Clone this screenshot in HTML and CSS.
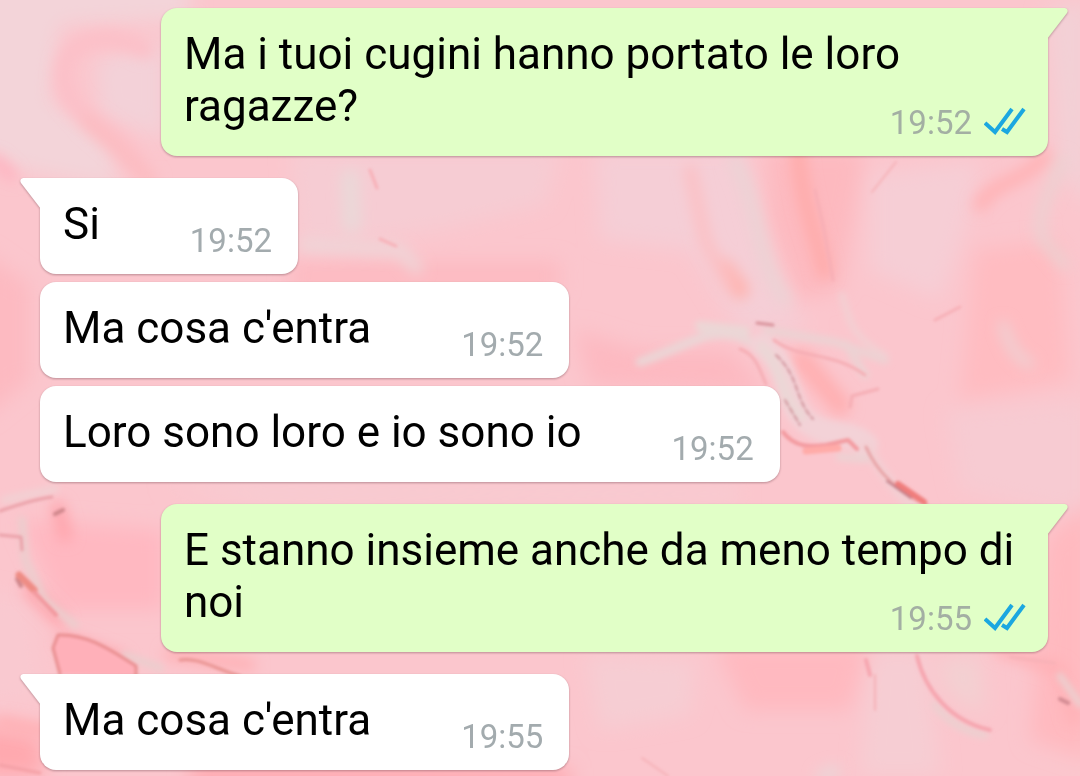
FILE: index.html
```
<!DOCTYPE html>
<html lang="it">
 <head>
 <meta charset="UTF-8">
 <meta name="viewport" content="width=device-width, initial-scale=1">
 <title>Chat</title>
 <link rel="stylesheet" href="styles.css">
 </head>

 <body>

  <!-- marble wallpaper -->
  <svg class="wallpaper" viewBox="0 0 1080 776" preserveAspectRatio="xMidYMid slice" aria-hidden="true">
   <defs>
    <filter id="wide" x="-50%" y="-50%" width="200%" height="200%"><feGaussianBlur stdDeviation="10"/></filter>
    <filter id="mid" x="-50%" y="-50%" width="200%" height="200%"><feGaussianBlur stdDeviation="7"/></filter>
    <filter id="soft" x="-20%" y="-20%" width="140%" height="140%"><feGaussianBlur stdDeviation="3"/></filter>
    <filter id="fine" x="-20%" y="-20%" width="140%" height="140%"><feGaussianBlur stdDeviation="1.5"/></filter>
   </defs>
   <rect width="1080" height="776" fill="#fbc6cd"/>

   <g filter="url(#wide)">
    <path fill="#f3d4d9" d="M-40 -40H190V20L60 25L50 100L110 140L120 190L20 170L-40 140Z"/>
    <path fill="#f3d1d8" d="M95 60L165 40V140L100 115Z"/>
    <path fill="#f6ccd3" d="M290 150H560L545 205L440 230L300 250Z"/>
    <path fill="#f5ced6" d="M595 150L740 150L770 270L810 330L740 330L690 250L600 240Z"/>
    <path fill="#f6ced5" d="M870 175L980 160L965 230L940 300L870 270Z"/>
    <path fill="#f3d0d6" d="M1045 10L1090 0V210L1060 170Z"/>
    <path fill="#fdb9bf" d="M765 150H865L840 290L800 300L770 220Z"/>
    <path fill="#fdb9c1" d="M575 330L640 350L730 350L770 395L590 385Z"/>
    <path fill="#ffbcc1" d="M975 250L1060 240L1070 380L960 400Z"/>
    <path fill="#fdbac1" d="M-20 250L30 285V380L-20 420Z"/>
    <path fill="#f7cbd2" d="M945 410L1090 400V520L960 490Z"/>
    <path fill="#f6cdd3" d="M160 485L740 488V500L260 502Z"/>
    <path fill="#f6cdd3" d="M585 655L695 660L690 715L600 730Z"/>
    <path fill="#ffb9c0" d="M715 645L870 645L850 710L745 710Z"/>
    <path fill="#f6cdd3" d="M870 650L925 650L940 776L860 776Z"/>
    <path fill="#f3d0d2" d="M935 660L980 655L985 715L950 695Z"/>
    <path fill="#ffb9bf" d="M1045 540L1090 500V760L1030 740Z"/>
    <path fill="#ffb8c1" d="M20 520L165 530V610L60 610Z"/>
    <path fill="#f9c9d0" d="M-20 590L30 600L45 700L-20 705Z"/>
    <path fill="#ffa9af" d="M-20 725L40 735L45 776H-20Z"/>
    <path fill="#fdbac1" d="M290 262H560V290H290Z"/>
    <path fill="#ffa9b0" d="M190 764L570 768V790H190Z"/>
   </g>

   <g filter="url(#mid)" fill="none" stroke-linecap="round">
    <path stroke="#fcc0c8" stroke-width="18" d="M145 50C100 25 55 45 65 85C75 125 120 125 140 170"/>
    <path stroke="#fcbcc1" stroke-width="16" d="M88 122L120 150L150 180"/>
    <path stroke="#ffb2c0" stroke-width="12" d="M-5 160L12 176"/>
    <path stroke="#ffaaa9" stroke-width="14" d="M798 150C802 205 815 230 825 272"/>
    <path stroke="#ffb2ae" stroke-width="18" d="M724 268L740 290"/>
    <path stroke="#fcbfc3" stroke-width="12" d="M690 170L705 240L728 285"/>
    <path stroke="#ead8d8" stroke-width="18" d="M350 178L352 224"/>
    <path stroke="#eed6d8" stroke-width="12" d="M305 245L400 250L417 268"/>
    <path stroke="#ead4d6" stroke-width="12" d="M735 160C760 210 755 255 785 300"/>
    <path stroke="#ead2d2" stroke-width="10" d="M1062 160C1055 185 1030 220 1045 242L1065 265"/>
    <path stroke="#ffb2b5" stroke-width="14" d="M1045 156C1020 185 995 180 980 205"/>
    <path stroke="#ffb0b2" stroke-width="22" d="M802 360L840 405"/>
    <path stroke="#ead5d7" stroke-width="8" d="M1003 325C1010 350 1020 360 1030 364"/>
    <path stroke="#ffb0b5" stroke-width="12" d="M1000 650L1060 670L1075 720"/>
    <path stroke="#ffa4ac" stroke-width="14" d="M65 640L120 660M58 508L65 535M30 590L60 620"/>
    <path stroke="#ffafb3" stroke-width="12" d="M0 722L50 732M170 654L250 665"/>
    <path stroke="#ead6d8" stroke-width="12" d="M822 776L835 771"/>
   </g>

   <!-- light ribbons -->
   <g filter="url(#soft)" fill="none" stroke-linecap="round" stroke-linejoin="round">
    <path stroke="#ebd5d6" stroke-width="9" d="M640 362C665 353 682 345 705 336C730 331 744 337 758 347"/>
    <path stroke="#f3d2d7" stroke-width="24" d="M762 345C792 365 785 410 810 424C830 438 850 430 866 445"/>
    <path stroke="#f3cfd3" stroke-width="10" d="M866 445C880 470 895 492 915 508"/>
    <path stroke="#ebd7d6" stroke-width="10" d="M762 347C785 371 781 400 801 416M700 326L745 331"/>
    <path stroke="#ecd2d3" stroke-width="8" d="M767 330L835 342L885 360M846 344L865 375M840 457L866 459"/>
    <path stroke="#f2d0d3" stroke-width="6" d="M842 295C850 322 850 335 885 355"/>
    <path stroke="#ebd0d0" stroke-width="7" d="M935 705C948 722 965 732 985 735M1060 676L1080 704"/>
    <path stroke="#eccdce" stroke-width="8" d="M22 520L25 560L45 600L75 625M125 655L160 668"/>
    <path stroke="#f2d0d3" stroke-width="8" d="M5 500L55 489"/>
   </g>

   <!-- dark veins -->
   <g filter="url(#fine)" fill="none" stroke-linecap="round" stroke-linejoin="round">
    <path stroke="#d8919a" stroke-width="3" d="M757 323L773 325"/>
    <path stroke="#f5adb4" stroke-width="3" d="M774 340C800 360 830 350 865 375M850 407L852 396L878 389M740 349C757 355 760 372 766 384"/>
    <path stroke="#cf9199" stroke-width="2" stroke-dasharray="6 3" d="M776 355C800 377 794 399 813 419M785 400L800 425"/>
    <path stroke="#f3999e" stroke-width="4" d="M783 432C795 448 811 447 826 445L848 440L857 449"/>
    <path stroke="#ffaba8" stroke-width="7" d="M806 451L838 448"/>
    <path stroke="#e7a0a3" stroke-width="3" d="M866 447C878 474 898 492 927 505"/>
    <path stroke="#f07d7b" stroke-width="6" d="M898 484L924 502"/>
    <path stroke="#b87480" stroke-width="2" d="M887 481L911 498"/>
    <path stroke="#f7afb6" stroke-width="3" d="M815 190L824 230L833 280M370 170L377 188M380 239L396 246M935 320L960 307"/>
    <path stroke="#f6a5af" stroke-width="4" d="M917 656C925 690 950 721 990 730M866 660L870 675"/>
    <path stroke="#d18a92" stroke-width="4" d="M1060 699L1068 703"/>
    <path stroke="#f5b0b6" stroke-width="2" d="M1010 657L1055 663M642 758L668 776M875 675V710M872 192L896 162"/>
    <path stroke="#eaa0a8" stroke-width="3" d="M0 511C20 504 35 499 52 497M0 535L21 537L22 550"/>
    <path stroke="#cd858a" stroke-width="4" d="M55 514L63 510M17 579L21 586"/>
    <path stroke="#ee8c84" stroke-width="7" d="M19 575L34 590"/>
    <path stroke="#f3989e" stroke-width="4" d="M34 592L56 615"/>
    <path fill="#ffb0b9" stroke="#e88d8e" stroke-width="3" d="M60 674L53 648L58 635C85 634 105 646 136 666L136 676"/>
    <path stroke="#e89391" stroke-width="3" d="M180 660C199 657 215 669 240 676"/>
    <path stroke="#f4a0a6" stroke-width="3" d="M0 765L40 773"/>
   </g>
  </svg>

  <svg class="symbols" aria-hidden="true">
   <symbol id="tail" viewBox="0 0 22 34">
    <path d="M22 0H3Q-1 1 1 5L21 31V34H22Z"/>
   </symbol>
   <symbol id="ticks" viewBox="0 0 42 28">
    <path d="M1 16L11 25L28 2M18 22L23 25L40 2"/>
   </symbol>
  </svg>

  <main class="chat">
   <div class="msg out first">
    <svg class="tail"><use href="#tail"/></svg>
    Ma i tuoi cugini hanno portato le loro ragazze?
    <span class="meta"><time>19:52</time><svg class="ticks" role="img" aria-label="Letto"><use href="#ticks"/></svg></span>
   </div>

   <div class="msg in first">
    <svg class="tail"><use href="#tail"/></svg>
    Si
    <span class="meta"><time>19:52</time></span>
   </div>
   <div class="msg in">
    Ma cosa c'entra
    <span class="meta"><time>19:52</time></span>
   </div>
   <div class="msg in">
    Loro sono loro e io sono io
    <span class="meta"><time>19:52</time></span>
   </div>

   <div class="msg out first">
    <svg class="tail"><use href="#tail"/></svg>
    E stanno insieme anche da meno tempo di noi
    <span class="meta"><time>19:55</time><svg class="ticks" role="img" aria-label="Letto"><use href="#ticks"/></svg></span>
   </div>

   <div class="msg in first">
    <svg class="tail"><use href="#tail"/></svg>
    Ma cosa c'entra
    <span class="meta"><time>19:55</time></span>
   </div>
  </main>
 </body>
</html>
```
FILE: styles.css
```
body        { margin: 0; background-color: #fbc6cd; color: #000;
              font-family: Roboto, "Liberation Sans", sans-serif; }

.wallpaper  { position: fixed; top: 0; left: 0; z-index: -1;
              width: 100%; height: 100%; }
.symbols    { position: absolute; width: 0; height: 0; }

.chat       { display: flex; flex-direction: column; gap: 8px;
              padding: 8px 32px 6px 40px; }

/* bubbles */
.msg        { position: relative; box-sizing: border-box;
              width: fit-content; max-width: 88%;
              padding: 20px 26px 24px 23px; border-radius: 16px;
              font-size: 44px; line-height: 52px;
              filter: drop-shadow(0 1px 1px rgba(90, 50, 60, 0.4)); }
.first      { margin-top: 14px; }
.first:first-child { margin-top: 0; }

.in         { align-self: flex-start; background-color: #fff; }
.out        { align-self: flex-end;   background-color: #e1ffc7;
              padding-right: 22px; }
.in.first   { border-top-left-radius: 0; }
.out.first  { border-top-right-radius: 0; }

/* the corner that points at the sender */
.tail       { position: absolute; top: 0; left: -20px;
              width: 22px; height: 34px; fill: #fff; }
.out .tail  { left: auto; right: -20px; fill: #e1ffc7;
              transform: scaleX(-1); }

/* time and read marks, hanging a little below the last line */
.meta       { float: right; display: flex; align-items: center; gap: 12px;
              margin: 25px 0 -9px 90px;
              color: #a3abae; font-size: 33px; line-height: 36px; }
.out .meta  { margin-left: 24px; color: #a3afa3; }
.ticks      { width: 42px; height: 28px; margin-bottom: 4px;
              fill: none; stroke: #1ba7e0; stroke-width: 4; }
```
